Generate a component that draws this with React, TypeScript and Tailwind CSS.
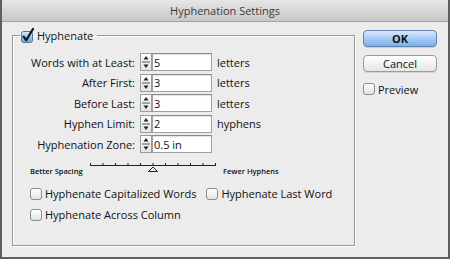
import React from 'react';

const rows = [
  { label: 'Words with at Least:', value: '5', unit: 'letters' },
  { label: 'After First:', value: '3', unit: 'letters' },
  { label: 'Before Last:', value: '3', unit: 'letters' },
  { label: 'Hyphen Limit:', value: '2', unit: 'hyphens' },
  { label: 'Hyphenation Zone:', value: '0.5 in', unit: '' },
];

function CheckBox({ checked }: { checked?: boolean }) {
  if (checked) {
    return (
      <svg width="14" height="15" viewBox="0 0 14 15" className="shrink-0 overflow-visible">
        <defs>
          <linearGradient id="cbFill" x1="0" y1="0" x2="0" y2="1">
            <stop offset="0" stopColor="#d6e8fa" />
            <stop offset="0.5" stopColor="#9cc4ee" />
            <stop offset="1" stopColor="#6fa6e0" />
          </linearGradient>
        </defs>
        <rect x="0.5" y="3.5" width="11" height="11" rx="2" fill="url(#cbFill)" stroke="#55779f" />
        <path d="M2.6 8.6 L5.2 12.2 L12 1" fill="none" stroke="#111" strokeWidth="2.2" strokeLinecap="round" strokeLinejoin="round" />
      </svg>
    );
  }
  return (
    <span className="block w-[12px] h-[12px] shrink-0 rounded-[3px] border border-[#8c8c8c] bg-linear-to-b from-white to-[#e2e2e2] shadow-[inset_0_1px_0_#fff]" />
  );
}

function Spinner() {
  return (
    <svg width="12" height="18" viewBox="0 0 12 18" className="shrink-0">
      <defs>
        <linearGradient id="spFill" x1="0" y1="0" x2="0" y2="1">
          <stop offset="0" stopColor="#ffffff" />
          <stop offset="1" stopColor="#e4e4e4" />
        </linearGradient>
      </defs>
      <rect x="0.5" y="0.5" width="11" height="17" fill="url(#spFill)" stroke="#9b9b9b" />
      <line x1="2" y1="9" x2="10" y2="9" stroke="#555" />
      <polygon points="6,3 8.5,6.5 3.5,6.5" fill="#222" />
      <polygon points="6,15 8.5,11.5 3.5,11.5" fill="#222" />
    </svg>
  );
}

function Slider() {
  const ticks = Array.from({ length: 11 }, (_, i) => 0.5 + i * 12.5);
  return (
    <svg width="127" height="12" viewBox="0 0 127 12" className="shrink-0">
      <line x1="0" y1="4.5" x2="126" y2="4.5" stroke="#222" />
      {ticks.map((x) => (
        <line key={x} x1={x} y1="2" x2={x} y2="5" stroke="#222" />
      ))}
      <polygon points="58.5,10.5 63,6 67.5,10.5" fill="#e8e8e8" stroke="#222" />
    </svg>
  );
}

export default function App() {
  return (
    <div className="w-[450px] h-[259px] flex flex-col bg-[#ececec] border-x-2 border-b-2 border-[#5e5e5e] font-['Open_Sans',sans-serif] text-[11px] text-[#111] leading-none overflow-hidden">
      <div className="h-[22px] shrink-0 flex items-center justify-center bg-linear-to-b from-[#e6e6e6] to-[#c8c8c8] border-b border-[#a4a4a4] text-[#3a3a3a]">
        Hyphenation Settings
      </div>

      <div className="flex flex-1">
        <fieldset className="ml-[10px] mt-[6px] w-[343px] h-[218px] border border-[#979797] shadow-[inset_1px_1px_0_#fff,1px_1px_0_#fff]">
          <legend className="ml-[7px] pr-[4px] pl-[1px] flex items-center gap-[3px] h-[14px]">
            <CheckBox checked />
            <span className="-ml-[1px]">Hyphenate</span>
          </legend>

          <div className="pt-[11px] flex flex-col gap-[2.5px]">
            {rows.map((r) => (
              <div key={r.label} className="flex items-center h-[18px]">
                <span className="w-[122px] text-right">{r.label}</span>
                <span className="ml-[5px] flex">
                  <Spinner />
                  <span className="w-[60px] h-[18px] bg-white border border-[#a0a0a0] border-t-[#8a8a8a] shadow-[inset_0_1px_1px_rgba(0,0,0,0.12)] flex items-center pl-[1px]">
                    {r.value}
                  </span>
                </span>
                {r.unit && <span className="ml-[5px]">{r.unit}</span>}
              </div>
            ))}
          </div>

          <div className="mt-[8px] flex items-start h-[17px]">
            <span className="ml-[17px] w-[60px] mt-[7px] text-[7.5px] font-semibold">Better Spacing</span>
            <Slider />
            <span className="ml-[6px] mt-[7px] text-[7.5px] font-semibold">Fewer Hyphens</span>
          </div>

          <div className="mt-[9px] ml-[17px] flex flex-col gap-[8px]">
            <div className="flex items-center h-[13px]">
              <CheckBox />
              <span className="ml-[3px]">Hyphenate Capitalized Words</span>
              <span className="ml-[10px]"><CheckBox /></span>
              <span className="ml-[3px]">Hyphenate Last Word</span>
            </div>
            <div className="flex items-center h-[13px]">
              <CheckBox />
              <span className="ml-[3px]">Hyphenate Across Column</span>
            </div>
          </div>
        </fieldset>

        <div className="ml-[8px] mt-[8px] w-[74px] flex flex-col">
          <button className="h-[17px] rounded-[4px] border border-[#5f84b0] bg-linear-to-b from-[#d7e8fb] via-[#a7cbf3] to-[#79b0ee] font-bold text-[11px] leading-none shadow-[0_1px_0_rgba(0,0,0,0.12)]">
            OK
          </button>
          <button className="mt-[8px] h-[17px] rounded-[4px] border border-[#9c9c9c] bg-linear-to-b from-white to-[#e6e6e6] text-[11px] leading-none shadow-[0_1px_0_rgba(0,0,0,0.1)]">
            Cancel
          </button>
          <div className="mt-[11px] flex items-center gap-[3px]">
            <CheckBox />
            <span>Preview</span>
          </div>
        </div>
      </div>
    </div>
  );
}
